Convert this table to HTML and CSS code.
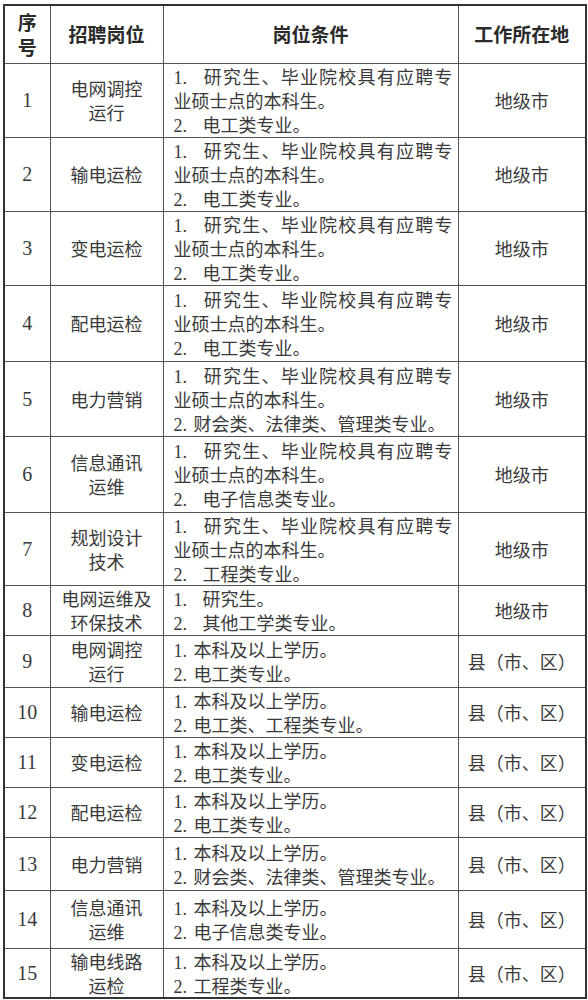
FILE: index.html
```html
<!DOCTYPE html>
<html lang="zh-CN">
<head>
<meta charset="utf-8">
<title>招聘岗位</title>
<link rel="stylesheet" href="styles.css">
</head>
<body>
<table class="jobs">
  <colgroup>
    <col class="c-no">
    <col class="c-pos">
    <col class="c-req">
    <col class="c-loc">
  </colgroup>
  <thead>
    <tr class="h58">
      <th class="no-h"><span class="hl">序</span><span class="hl">号</span></th>
      <th>招聘岗位</th>
      <th>岗位条件</th>
      <th>工作所在地</th>
    </tr>
  </thead>
  <tbody>
    <tr class="h74">
      <td class="no">1</td>
      <td class="pos">电网调控<br>运行</td>
      <td class="req"><span class="ln j"><span class="num w">1.</span>研究生、毕业院校具有应聘专</span><span class="ln">业硕士点的本科生。</span><span class="ln"><span class="num w">2.</span>电工类专业。</span></td>
      <td class="loc">地级市</td>
    </tr>
    <tr class="h74">
      <td class="no">2</td>
      <td class="pos">输电运检</td>
      <td class="req"><span class="ln j"><span class="num w">1.</span>研究生、毕业院校具有应聘专</span><span class="ln">业硕士点的本科生。</span><span class="ln"><span class="num w">2.</span>电工类专业。</span></td>
      <td class="loc">地级市</td>
    </tr>
    <tr class="h74">
      <td class="no">3</td>
      <td class="pos">变电运检</td>
      <td class="req"><span class="ln j"><span class="num w">1.</span>研究生、毕业院校具有应聘专</span><span class="ln">业硕士点的本科生。</span><span class="ln"><span class="num w">2.</span>电工类专业。</span></td>
      <td class="loc">地级市</td>
    </tr>
    <tr class="h76">
      <td class="no">4</td>
      <td class="pos">配电运检</td>
      <td class="req"><span class="ln j"><span class="num w">1.</span>研究生、毕业院校具有应聘专</span><span class="ln">业硕士点的本科生。</span><span class="ln"><span class="num w">2.</span>电工类专业。</span></td>
      <td class="loc">地级市</td>
    </tr>
    <tr class="h75">
      <td class="no">5</td>
      <td class="pos">电力营销</td>
      <td class="req"><span class="ln j"><span class="num w">1.</span>研究生、毕业院校具有应聘专</span><span class="ln">业硕士点的本科生。</span><span class="ln"><span class="num">2.</span>财会类、法律类、管理类专业。</span></td>
      <td class="loc">地级市</td>
    </tr>
    <tr class="h76">
      <td class="no">6</td>
      <td class="pos">信息通讯<br>运维</td>
      <td class="req"><span class="ln j"><span class="num w">1.</span>研究生、毕业院校具有应聘专</span><span class="ln">业硕士点的本科生。</span><span class="ln"><span class="num w">2.</span>电子信息类专业。</span></td>
      <td class="loc">地级市</td>
    </tr>
    <tr class="h73">
      <td class="no">7</td>
      <td class="pos">规划设计<br>技术</td>
      <td class="req"><span class="ln j"><span class="num w">1.</span>研究生、毕业院校具有应聘专</span><span class="ln">业硕士点的本科生。</span><span class="ln"><span class="num w">2.</span>工程类专业。</span></td>
      <td class="loc">地级市</td>
    </tr>
    <tr class="h50">
      <td class="no">8</td>
      <td class="pos">电网运维及<br>环保技术</td>
      <td class="req"><span class="ln"><span class="num w">1.</span>研究生。</span><span class="ln"><span class="num w">2.</span>其他工学类专业。</span></td>
      <td class="loc">地级市</td>
    </tr>
    <tr class="h52">
      <td class="no">9</td>
      <td class="pos">电网调控<br>运行</td>
      <td class="req"><span class="ln"><span class="num">1.</span>本科及以上学历。</span><span class="ln"><span class="num">2.</span>电工类专业。</span></td>
      <td class="loc">县（市、区）</td>
    </tr>
    <tr class="h50">
      <td class="no">10</td>
      <td class="pos">输电运检</td>
      <td class="req"><span class="ln"><span class="num">1.</span>本科及以上学历。</span><span class="ln"><span class="num">2.</span>电工类、工程类专业。</span></td>
      <td class="loc">县（市、区）</td>
    </tr>
    <tr class="h50">
      <td class="no">11</td>
      <td class="pos">变电运检</td>
      <td class="req"><span class="ln"><span class="num">1.</span>本科及以上学历。</span><span class="ln"><span class="num">2.</span>电工类专业。</span></td>
      <td class="loc">县（市、区）</td>
    </tr>
    <tr class="h50">
      <td class="no">12</td>
      <td class="pos">配电运检</td>
      <td class="req"><span class="ln"><span class="num">1.</span>本科及以上学历。</span><span class="ln"><span class="num">2.</span>电工类专业。</span></td>
      <td class="loc">县（市、区）</td>
    </tr>
    <tr class="h53">
      <td class="no">13</td>
      <td class="pos">电力营销</td>
      <td class="req"><span class="ln"><span class="num">1.</span>本科及以上学历。</span><span class="ln"><span class="num">2.</span>财会类、法律类、管理类专业。</span></td>
      <td class="loc">县（市、区）</td>
    </tr>
    <tr class="h58">
      <td class="no">14</td>
      <td class="pos">信息通讯<br>运维</td>
      <td class="req"><span class="ln"><span class="num">1.</span>本科及以上学历。</span><span class="ln"><span class="num">2.</span>电子信息类专业。</span></td>
      <td class="loc">县（市、区）</td>
    </tr>
    <tr class="h50">
      <td class="no">15</td>
      <td class="pos">输电线路<br>运检</td>
      <td class="req"><span class="ln"><span class="num">1.</span>本科及以上学历。</span><span class="ln"><span class="num">2.</span>工程类专业。</span></td>
      <td class="loc">县（市、区）</td>
    </tr>
  </tbody>
</table>
</body>
</html>
```

FILE: styles.css
```css
html, body {
  margin: 0;
  background: #ffffff;
}

body {
  padding: 4px 3px 0 3px;
  font-family: "Noto Sans CJK SC", sans-serif;
  color: #3a3a3a;
}

.jobs {
  width: 582px;
  table-layout: fixed;
  border-collapse: collapse;
  border: 2px solid #333333;
}

.c-no { width: 46px; }
.c-pos { width: 113px; }
.c-req { width: 295px; }
.c-loc { width: 128px; }

.jobs th,
.jobs td {
  border: 1px solid #555555;
  padding: 0;
  vertical-align: middle;
  overflow: hidden;
}

.jobs th {
  font-family: "Noto Sans CJK SC", sans-serif;
  font-weight: 700;
  font-size: 19px;
  line-height: 24px;
  color: #2a2a2a;
  text-align: center;
}

.hl {
  display: block;
  font-size: 19px;
  line-height: 25px;
  height: 25px;
}

.h50 { height: 50px; }
.h52 { height: 52px; }
.h53 { height: 53px; }
.h58 { height: 58px; }
.h73 { height: 73px; }
.h74 { height: 74px; }
.h75 { height: 75px; }
.h76 { height: 76px; }

.no {
  font-family: "Liberation Serif", serif;
  font-size: 20px;
  line-height: 24px;
  text-align: center;
}

.pos,
.loc {
  font-family: "Noto Sans CJK SC", sans-serif;
  font-size: 18px;
  line-height: 24px;
  text-align: center;
}

.jobs td.req {
  font-family: "Noto Sans CJK SC", sans-serif;
  font-size: 18px;
  line-height: 24px;
  padding: 0 5px 0 10px;
}

.ln {
  display: block;
  height: 24px;
  white-space: nowrap;
}

.ln.j {
  text-align: justify;
  text-align-last: justify;
}

.num {
  font-family: "Liberation Serif", serif;
  margin-right: 6.5px;
}

.num.w {
  margin-right: 15.5px;
}
```
